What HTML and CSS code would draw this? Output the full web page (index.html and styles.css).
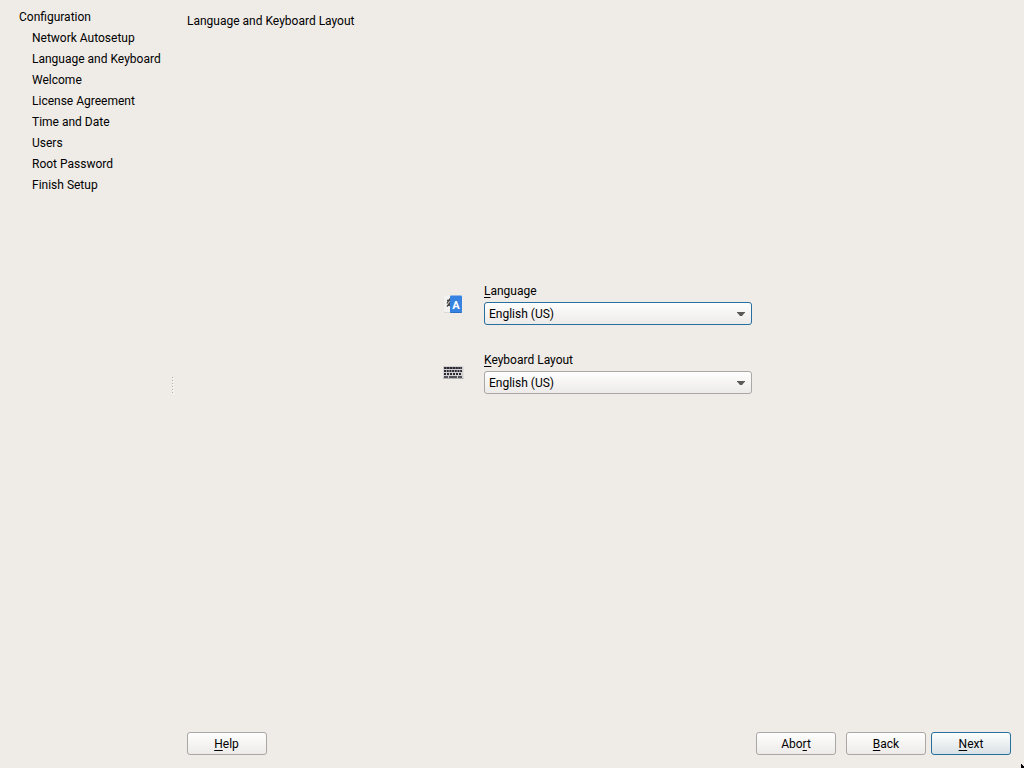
FILE: index.html
```html
<!DOCTYPE html>
<html lang="en">
<head>
<meta charset="utf-8">
<title>Language and Keyboard Layout</title>
<link rel="stylesheet" href="styles.css">
</head>
<body>
<div class="wizard">
  <nav class="steps">
    <div class="steps-title">Configuration</div>
    <ul class="steps-list">
      <li>Network Autosetup</li>
      <li>Language and Keyboard</li>
      <li>Welcome</li>
      <li>License Agreement</li>
      <li>Time and Date</li>
      <li>Users</li>
      <li>Root Password</li>
      <li>Finish Setup</li>
    </ul>
  </nav>
  <div class="splitter"><svg width="3" height="17" viewBox="0 0 3 17" shape-rendering="crispEdges"><path d="M1 1h1v1h-1zM1 4h1v1h-1zM1 7h1v1h-1zM1 10h1v1h-1zM1 13h1v1h-1zM1 16h1v1h-1z" fill="#fff"/><path d="M0 0h1v1H0zM0 3h1v1H0zM0 6h1v1H0zM0 9h1v1H0zM0 12h1v1H0zM0 15h1v1H0z" fill="#b5b2af"/></svg></div>
  <main class="page">
    <h1 class="heading">Language and Keyboard Layout</h1>
    <form class="fields">
      <div class="field">
        <svg class="icon" width="22" height="22" viewBox="0 0 22 22">
          <rect x="2" y="2.500" width="12" height="17" rx="1" fill="#f3f2f1"/>
          <rect x="2" y="19" width="7" height="1" fill="#dad7d4"/>
          <path d="M5 7.500h4M8 5.500L5 10.500M8.500 9L5 13.500M6.500 10.500l2.500 3" stroke="#444" stroke-width="1.300" fill="none"/>
          <rect x="8" y="2.500" width="12" height="17.500" rx="1" fill="#3683e2"/>
          <rect x="8.500" y="19" width="11" height="1" fill="#2b6fc4"/>
          <text class="icon-letter" x="14" y="15.500" text-anchor="middle">A</text>
        </svg>
        <div class="control">
          <label class="label"><u>L</u>anguage</label>
          <div class="combo focused"><span>English (US)</span><svg class="arrow" width="8" height="4" viewBox="0 0 8 4"><path d="M0 0h8v.5L5 4H3L0 .5z" fill="#5b5a59"/></svg></div>
        </div>
      </div>
      <div class="field">
        <svg class="icon" width="22" height="22" viewBox="0 0 22 22">
          <rect x="1" y="4" width="20.500" height="13" rx="1" fill="#d3d2d1"/>
          <rect x="1" y="16" width="20.500" height="1" fill="#b3b1af"/>
          <g stroke="#2b2933" stroke-width="2" fill="none">
            <path d="M2 6h18" stroke-dasharray="2.500 .35"/>
            <path d="M2 9h18" stroke-dasharray="2 .7"/>
            <path d="M2 12h18" stroke-dasharray="2 1"/>
            <path d="M2 15h4M7 15h8M16 15h4" stroke-width="1.600"/>
          </g>
        </svg>
        <div class="control">
          <label class="label"><u>K</u>eyboard Layout</label>
          <div class="combo"><span>English (US)</span><svg class="arrow" width="8" height="4" viewBox="0 0 8 4"><path d="M0 0h8v.5L5 4H3L0 .5z" fill="#5b5a59"/></svg></div>
        </div>
      </div>
    </form>
    <footer class="actions">
      <button class="button help"><u>H</u>elp</button>
      <button class="button abort">Abo<u>r</u>t</button>
      <button class="button back"><u>B</u>ack</button>
      <button class="button next"><u>N</u>ext</button>
    </footer>
  </main>
</div>
<svg class="cursor" width="4" height="4" viewBox="0 0 4 4" shape-rendering="crispEdges"><path d="M1 0h1v1h1v1h1v2H1z" fill="#000"/></svg>
</body>
</html>
```
FILE: styles.css
```css
* { box-sizing: border-box; }
body {
  margin: 0;
  background: #efebe7;
  color: #000;
  font: 12px/14px Roboto, sans-serif;
  overflow: hidden;
}
u {
  text-decoration: underline 1px;
  text-underline-offset: 2px;
  text-decoration-skip-ink: none;
}
.wizard { display: flex; height: 768px; }
.steps { width: 171px; padding: 7px 0 0 19px; line-height: 21px; white-space: nowrap; }
.steps-list { margin: 0; padding: 0 0 0 13px; list-style: none; }
.splitter { width: 7px; padding-top: 2px; display: flex; align-items: center; }
.splitter svg { display: block; margin-left: 1px; }
.page { flex: 1; display: flex; flex-direction: column; padding: 14px 13px 13px 9px; }
.heading { margin: 0; font-size: 12px; font-weight: 400; line-height: 14px; }
.fields { flex: 1; margin: 0; padding: 256px 0 0 255px; display: flex; flex-direction: column; gap: 28px; }
.field { display: flex; align-items: flex-start; gap: 20px; height: 41px; }
.icon { display: block; flex: none; margin-top: 9px; }
.icon-letter { font: 700 11px Roboto, sans-serif; fill: #fff; }
.control { width: 268px; }
.label { display: block; height: 18px; line-height: 14px; }
.combo {
  height: 23px;
  padding: 0 6px 0 4px;
  display: flex;
  align-items: center;
  justify-content: space-between;
  border: 1px solid #aaa7a4;
  border-radius: 3px;
  background: linear-gradient(#fefefe, #edebe9);
}
.combo.focused { border-color: #266f9e; }
.actions { display: flex; }
.button {
  width: 80px;
  height: 23px;
  padding: 0;
  border: 1px solid #aaa7a4;
  border-radius: 3px;
  background: linear-gradient(#fefefe, #edebe9);
  color: #000;
  font: inherit;
}
.help { padding-right: 1px; }
.abort { margin-left: auto; }
.back { margin-left: 10px; }
.next { margin-left: 5px; border-color: #266f9e; background: linear-gradient(#fdfefe, #d9e1e4); }
.cursor { position: absolute; right: 0; bottom: 0; }
```
